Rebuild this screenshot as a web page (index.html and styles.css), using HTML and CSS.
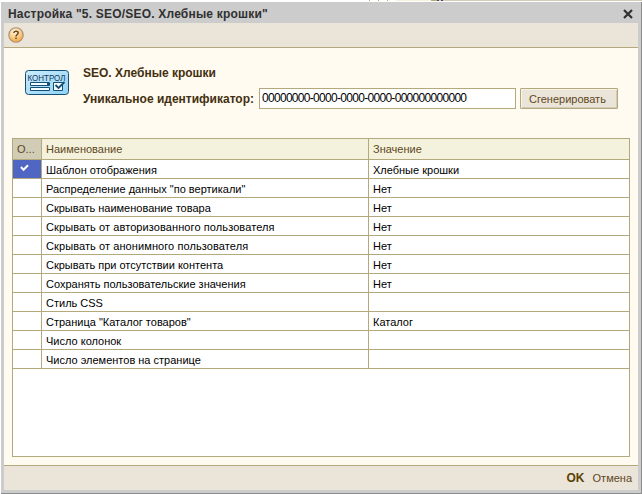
FILE: index.html
```
<!DOCTYPE html>
<html lang="ru">
<head>
<meta charset="utf-8">
<title>Настройка</title>
<link rel="stylesheet" href="styles.css">
</head>
<body>
<div class="backdrop"><i class="tick"></i><i class="tick"></i><i class="tick"></i><i class="band"></i><i class="mark"></i><i class="edge"></i></div>
<div class="window">
  <header class="titlebar">
    <span class="title">Настройка "5. SEO/SEO. Хлебные крошки"</span>
    <svg class="close" width="10" height="10" viewBox="0 0 10 10"><path d="M1 1L9 9M9 1L1 9" stroke="#303030" stroke-width="2.2"/></svg>
  </header>
  <div class="toolbar">
    <svg width="16" height="16" viewBox="0 0 16 16">
      <defs><radialGradient id="orb" cx=".4" cy=".25" r=".8"><stop offset="0" stop-color="#fff3d8"/><stop offset=".5" stop-color="#fbd08a"/><stop offset="1" stop-color="#f2a03c"/></radialGradient></defs>
      <circle cx="8" cy="8" r="7.2" fill="url(#orb)" stroke="#a98d72" stroke-width="1.1"/>
      <path d="M5.9 6.1C5.9 3.5 10.2 3.5 10.2 6C10.2 7.5 8 7.5 8 9.4M8 10.6V12" fill="none" stroke="#5d4026" stroke-width="1.4"/>
    </svg>
  </div>
  <main class="content">
    <div class="form">
      <svg class="logo" width="44" height="26" viewBox="0 0 44 26">
        <defs><linearGradient id="sky" x1="0" x2="1" y2="1"><stop offset="0" stop-color="#c9ecfc"/><stop offset="1" stop-color="#92d2f5"/></linearGradient></defs>
        <rect x=".5" y=".5" width="43" height="24" rx="3" fill="url(#sky)" stroke="#164f74"/>
        <text class="logo-text" x="2.5" y="10.5" textLength="38" lengthAdjust="spacingAndGlyphs">КОНТРОЛ</text>
        <path d="M5.5 12.5H24.5V15.5H5.5ZM5.5 17.5H24.5V20.5H5.5ZM28.5 12.5H37.5V20.5H28.5Z" fill="#f5fcff" stroke="#164f74"/>
        <path d="M22 13H24V15H22Z" fill="#164f74"/>
        <path d="M30.5 15L33.5 18L39.5 12" fill="none" stroke="#164f74" stroke-width="1.8"/>
      </svg>
      <div class="fields">
        <div class="heading">SEO. Хлебные крошки</div>
        <div class="field">
          <span class="label">Уникальное идентификатор:</span>
          <div class="input"><span>00000000-0000-0000-0000-000000000000</span></div>
          <div class="button">Сгенерировать</div>
        </div>
      </div>
    </div>
    <div class="table">
      <div class="row head"><span class="o">О...</span><span>Наименование</span><span>Значение</span></div>
      <div class="row"><span class="selected"><svg width="9" height="8" viewBox="0 0 9 8"><path d="M1 3L3.5 5.7L8 1.2" fill="none" stroke="#fff" stroke-width="2"/></svg></span><span>Шаблон отображения</span><span>Хлебные крошки</span></div>
      <div class="row"><span></span><span>Распределение данных "по вертикали"</span><span>Нет</span></div>
      <div class="row"><span></span><span>Скрывать наименование товара</span><span>Нет</span></div>
      <div class="row"><span></span><span class="wide">Скрывать от авторизованного пользователя</span><span>Нет</span></div>
      <div class="row"><span></span><span class="wide">Скрывать от анонимного пользователя</span><span>Нет</span></div>
      <div class="row"><span></span><span>Скрывать при отсутствии контента</span><span>Нет</span></div>
      <div class="row"><span></span><span>Сохранять пользовательские значения</span><span>Нет</span></div>
      <div class="row"><span></span><span>Стиль CSS</span><span></span></div>
      <div class="row"><span></span><span>Страница "Каталог товаров"</span><span>Каталог</span></div>
      <div class="row"><span></span><span>Число колонок</span><span></span></div>
      <div class="row"><span></span><span>Число элементов на странице</span><span></span></div>
    </div>
  </main>
  <footer class="footer"><span class="ok">OK</span><span class="cancel">Отмена</span></footer>
</div>
</body>
</html>
```
FILE: styles.css
```
* { box-sizing: border-box; }
body { margin: 0; width: 642px; height: 494px; overflow: hidden; background: #fff; font: 11px/14px "Liberation Sans", sans-serif; color: #000; white-space: nowrap; }
.backdrop { height: 2px; display: flex; padding-left: 369px; border-bottom: 1px solid #fff; }
.tick { width: 1px; margin-right: 8px; background: #b5ab7c; }
.band { width: 35px; background: #f4f2dd; }
.mark { width: 12px; background: linear-gradient(90deg, #b5ab7c 50%, #49426e 50% 65%, #d6d2b8 65% 85%, #49426e 85%); }
.edge { flex: 1; background: #d0ccb8; }
.window { height: 492px; margin-left: 1px; background: #ccc; border-right: 1px solid #8c8c8c; border-bottom: 1px solid #8c8c8c; padding: 0 3px 3px; display: flex; flex-direction: column; }
.titlebar { height: 21px; display: flex; align-items: center; justify-content: space-between; padding: 2px 5px 0 4px; }
.title { font-size: 12px; font-weight: bold; color: #303030; letter-spacing: .2px; }
.toolbar { height: 25px; background: #ebe4d9; border-bottom: 1px solid #b3a97d; padding: 4px 0 0 4px; }
.toolbar svg { display: block; }
.content { flex: 1; background: #fffbf0; padding: 0 8px 8px; display: flex; flex-direction: column; }
.form { height: 90px; display: flex; padding: 18px 0 0 13px; }
.logo { margin-top: 4px; flex: none; overflow: visible; }
.logo-text { font: 9px "Liberation Sans", sans-serif; fill: #16385a; }
.fields { margin-left: 14px; }
.heading { font-size: 12px; font-weight: bold; color: #443010; height: 22px; }
.field { display: flex; height: 21px; }
.label { width: 176px; padding-top: 4px; font-size: 12px; font-weight: bold; color: #443010; }
.input { width: 257px; border: 1px solid #b3a97d; background: #fff; padding: 2px; font-size: 12px; letter-spacing: -.7px; }
.button { width: 98px; margin-left: 4px; border: 1px solid #b3a97d; border-radius: 1px; background: #ebe4d9; box-shadow: inset 1px 1px #f8f3e8, inset -1px -1px #d5cbb9; color: #5e481c; padding: 3px 0 0 8px; }
.table { flex: 1; width: 618px; border: 1px solid #b3a97d; background: #fff; }
.row { display: grid; grid-template-columns: 28px 327px 1fr; height: 19px; border-bottom: 1px solid #b3a97d; }
.row span { padding: 3px 0 0 4px; }
.row span:not(:first-child) { border-left: 1px solid #b3a97d; }
.row .wide { letter-spacing: .09px; }
.head { height: 21px; background: #f4f2dd; color: #5e481c; }
.head .o { background: #d1ccb5; }
.row .selected { background: #4f67c3; padding: 4px 0 0 7px; }
.selected svg { display: block; }
.footer { height: 25px; border-top: 1px solid #b3a97d; background: #ebe4d9; display: flex; justify-content: flex-end; padding: 5px 6px 0 0; color: #5e481c; }
.ok { font-weight: bold; font-size: 12px; margin-right: 8px; color: #5a4100; }
```
